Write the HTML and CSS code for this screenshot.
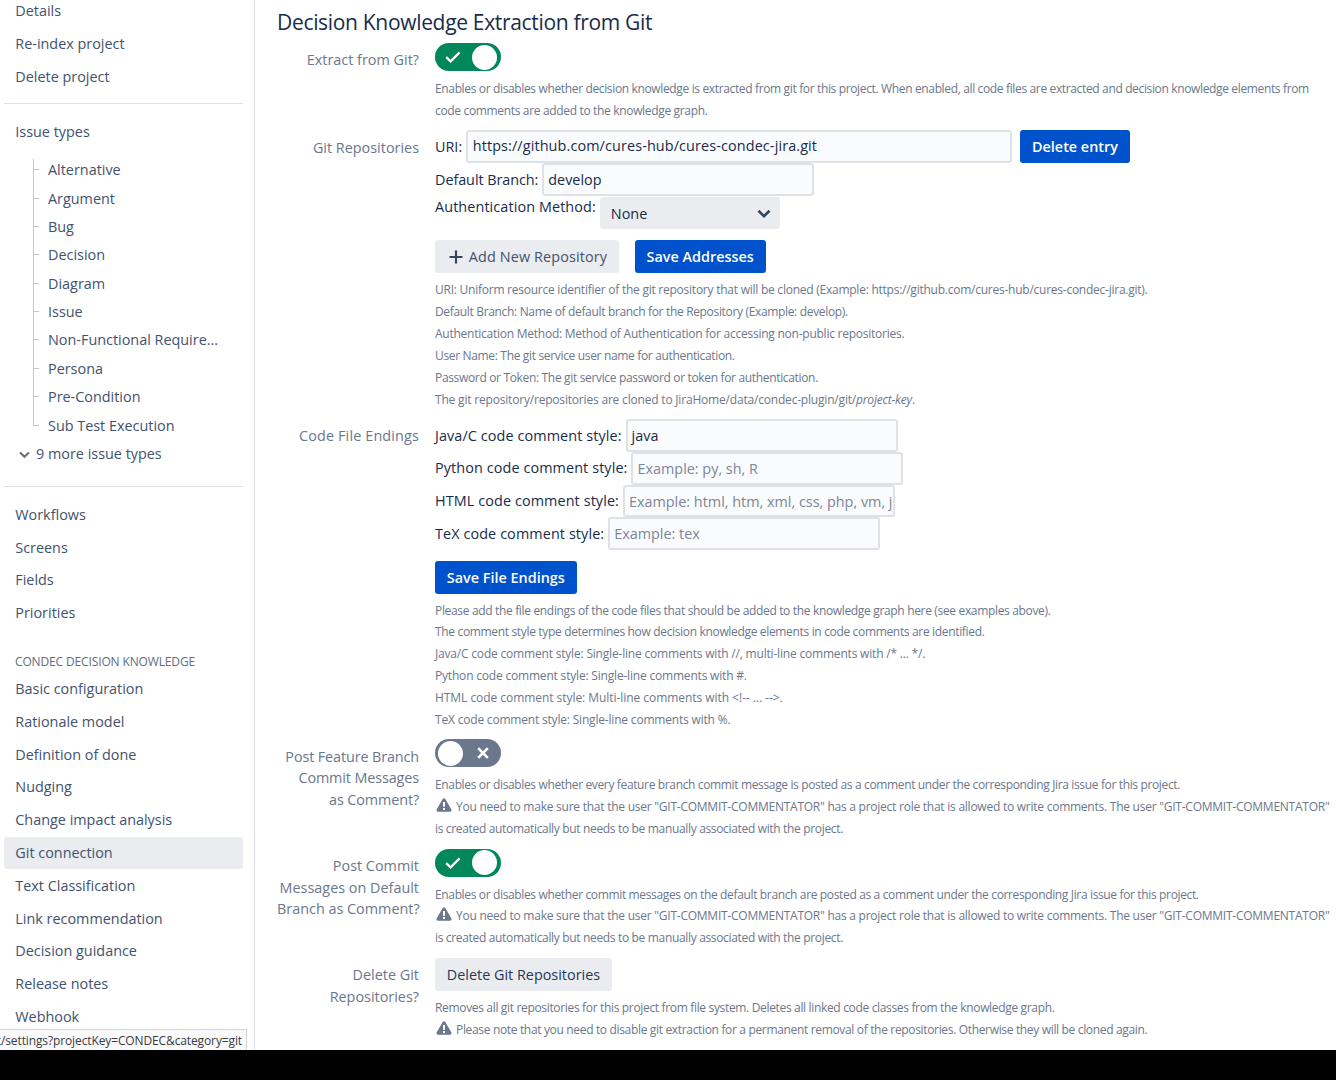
FILE: index.html
```html
<!DOCTYPE html>
<html lang="en">
<head>
<meta charset="utf-8">
<title>Git connection - Project settings</title>
<link rel="stylesheet" href="styles.css">
</head>
<body>
<svg class="sprite" aria-hidden="true">
  <symbol id="check" viewBox="0 0 16 12"><path d="M1.2 6.2 5.6 10.4 14.6 1.4" fill="none" stroke="#fff" stroke-width="2.3"/></symbol>
  <symbol id="cross" viewBox="0 0 12 12"><path d="M1.2 1.2 10.8 10.8M10.8 1.2 1.2 10.8" fill="none" stroke="#fff" stroke-width="2.6"/></symbol>
  <symbol id="warn" viewBox="0 0 16 14"><path fill-rule="evenodd" d="M6.7 1.1Q8-.8 9.3 1.1L15.4 11.5Q16 13.6 14 13.7H2Q0 13.6.6 11.5ZM7 4V8.8H9V4ZM7 10V12H9V10Z" fill="#6b778c"/></symbol>
</svg>
<div class="page">
  <nav class="sidebar">
    <ul class="menu menu-top">
      <li>Details</li><li>Re-index project</li><li>Delete project</li>
    </ul>
    <hr>
    <ul class="menu menu-types"><li>Issue types</li></ul>
    <ul class="tree">
      <li>Alternative</li><li>Argument</li><li>Bug</li><li>Decision</li><li>Diagram</li><li>Issue</li><li>Non-Functional Require...</li><li>Persona</li><li>Pre-Condition</li><li>Sub Test Execution</li>
    </ul>
    <div class="more"><svg width="11" height="8" viewBox="0 0 11 8"><path d="M1 1.5 5.5 5.8 10 1.5" fill="none" stroke="#707070" stroke-width="2.2"/></svg><span>9 more issue types</span></div>
    <hr class="hr-low">
    <ul class="menu menu-types">
      <li>Workflows</li><li>Screens</li><li>Fields</li><li>Priorities</li>
    </ul>
    <h3 class="nav-heading"><span>CONDEC DECISION KNOWLEDGE</span></h3>
    <ul class="menu">
      <li>Basic configuration</li><li>Rationale model</li><li>Definition of done</li><li>Nudging</li><li>Change impact analysis</li><li class="active">Git connection</li><li>Text Classification</li><li>Link recommendation</li><li>Decision guidance</li><li>Release notes</li><li>Webhook</li>
    </ul>
    <div class="status"><span>t/settings?projectKey=CONDEC&amp;category=git</span></div>
  </nav>
  <main class="content">
    <h2><span>Decision Knowledge Extraction from Git</span></h2>

    <section class="field">
      <div class="label">Extract from Git?</div>
      <div class="control">
        <div class="toggle on"><svg width="16" height="12"><use href="#check"/></svg><i></i></div>
        <div class="help"><p class="tight">Enables or disables whether decision knowledge is extracted from git for this project. When enabled, all code files are extracted and decision knowledge elements from</p><p>code comments are added to the knowledge graph.</p></div>
      </div>
    </section>

    <section class="field">
      <div class="label">Git Repositories</div>
      <div class="control">
        <div class="row"><label class="plain">URI:</label><div class="input wide">https://github.com/cures-hub/cures-condec-jira.git</div><button class="btn primary delete-entry">Delete entry</button></div>
        <div class="row"><label class="narrow">Default Branch:</label><div class="input">develop</div></div>
        <div class="row auth"><label>Authentication Method:</label><div class="select"><span>None</span><svg width="14" height="10" viewBox="0 0 14 10"><path d="M1.5 1.8 7 7.2 12.5 1.8" fill="none" stroke="#344563" stroke-width="2.6"/></svg></div></div>
        <div class="actions"><button class="btn add"><svg width="14" height="14" viewBox="0 0 14 14"><path d="M7 .5V13.5M.5 7H13.5" stroke="#344563" stroke-width="2.2"/></svg>Add New Repository</button><button class="btn primary">Save Addresses</button></div>
        <div class="help"><p class="loose">URI: Uniform resource identifier of the git repository that will be cloned (Example: https://github.com/cures-hub/cures-condec-jira.git).</p><p>Default Branch: Name of default branch for the Repository (Example: develop).</p><p class="loose">Authentication Method: Method of Authentication for accessing non-public repositories.</p><p>User Name: The git service user name for authentication.</p><p>Password or Token: The git service password or token for authentication.</p><p class="looser">The git repository/repositories are cloned to JiraHome/data/condec-plugin/git/<em>project-key</em>.</p></div>
      </div>
    </section>

    <section class="field">
      <div class="label spaced">Code File Endings</div>
      <div class="control">
        <div class="row"><label>Java/C code comment style:</label><div class="input">java</div></div>
        <div class="row"><label>Python code comment style:</label><div class="input hint">Example: py, sh, R</div></div>
        <div class="row"><label>HTML code comment style:</label><div class="input hint">Example: html, htm, xml, css, php, vm, j</div></div>
        <div class="row"><label>TeX code comment style:</label><div class="input hint">Example: tex</div></div>
        <div class="actions"><button class="btn primary">Save File Endings</button></div>
        <div class="help"><p>Please add the file endings of the code files that should be added to the knowledge graph here (see examples above).</p><p>The comment style type determines how decision knowledge elements in code comments are identified.</p><p class="looser">Java/C code comment style: Single-line comments with //, multi-line comments with /* ... */.</p><p class="looser">Python code comment style: Single-line comments with #.</p><p class="loosest">HTML code comment style: Multi-line comments with &lt;!-- ... --&gt;.</p><p class="looser">TeX code comment style: Single-line comments with %.</p></div>
      </div>
    </section>

    <section class="field">
      <div class="label snug">Post Feature Branch<br>Commit Messages<br>as Comment?</div>
      <div class="control">
        <div class="toggle off"><i></i><svg width="12" height="12"><use href="#cross"/></svg></div>
        <div class="help"><p class="tight">Enables or disables whether every feature branch commit message is posted as a comment under the corresponding Jira issue for this project.</p><p class="loose"><svg class="warn" width="16" height="14"><use href="#warn"/></svg>You need to make sure that the user "GIT-COMMIT-COMMENTATOR" has a project role that is allowed to write comments. The user "GIT-COMMIT-COMMENTATOR"</p><p>is created automatically but needs to be manually associated with the project.</p></div>
      </div>
    </section>

    <section class="field">
      <div class="label">Post Commit<br>Messages on Default<br>Branch as Comment?</div>
      <div class="control">
        <div class="toggle on"><svg width="16" height="12"><use href="#check"/></svg><i></i></div>
        <div class="help"><p class="tight">Enables or disables whether commit messages on the default branch are posted as a comment under the corresponding Jira issue for this project.</p><p class="loose"><svg class="warn" width="16" height="14"><use href="#warn"/></svg>You need to make sure that the user "GIT-COMMIT-COMMENTATOR" has a project role that is allowed to write comments. The user "GIT-COMMIT-COMMENTATOR"</p><p>is created automatically but needs to be manually associated with the project.</p></div>
      </div>
    </section>

    <section class="field">
      <div class="label">Delete Git<br>Repositories?</div>
      <div class="control">
        <button class="btn dark">Delete Git Repositories</button>
        <div class="help"><p>Removes all git repositories for this project from file system. Deletes all linked code classes from the knowledge graph.</p><p><svg class="warn" width="16" height="14"><use href="#warn"/></svg>Please note that you need to disable git extraction for a permanent removal of the repositories. Otherwise they will be cloned again.</p></div>
      </div>
    </section>
  </main>
</div>
</body>
</html>
```
FILE: styles.css
```css
* { box-sizing: border-box; }
body { margin: 0; height: 1080px; background: #000; overflow: hidden; font: 14.4px/21.84px "Open Sans", "Noto Sans", sans-serif; color: #172b4d; }
ul, h2, h3, p { margin: 0; padding: 0; list-style: none; font-weight: 400; }
.sprite { display: none; }
.page { display: flex; height: 1050px; background: #fff; overflow: hidden; }

.sidebar { position: relative; flex: none; width: 255px; padding: 0 11px 0 4px; border-right: 1px solid #dfe1e6; color: #42526e; white-space: nowrap; }
.menu li { height: 32.77px; padding-left: 11.3px; line-height: 32px; border-radius: 3px; }
.menu-top { margin-top: -5px; }
.menu .active { height: 32px; margin-bottom: .77px; background: #ebecf0; }
.sidebar hr { height: 1px; margin: 9.7px 0 11.6px; border: 0; background: #dfe1e6; }
.sidebar .hr-low { margin: 17.6px 0 11.8px; }
.tree { margin: 7.8px 0 0 29px; }
.tree li { position: relative; height: 28.4px; padding-left: 15px; line-height: 28px; }
.tree li::before { content: ""; position: absolute; left: 0; top: 0; width: 1px; height: 100%; background: #c1c7d0; }
.tree li:first-child::before { top: 3px; height: 26px; }
.tree li:last-child::before { height: 14px; }
.tree li::after { content: ""; position: absolute; left: 0; top: 13px; width: 6px; height: 1px; background: #c1c7d0; }
.more { display: flex; align-items: center; height: 28.4px; padding-left: 15px; gap: 6px; }
.more svg { margin-top: 2px; }
.nav-heading { height: 20px; margin: 21.8px 0 1.5px; padding-left: 11px; font-size: 12px; line-height: 20px; letter-spacing: -.14px; color: #5e6c84; }
.status { position: absolute; left: 0; bottom: 0; display: flex; justify-content: flex-end; width: 247px; height: 21px; padding-right: 4px; overflow: hidden; border: solid #d5d5d5; border-width: 1px 1px 0 0; background: #f9f9fa; color: #3b3b3f; font-size: 12px; line-height: 22px; letter-spacing: -.12px; }

.content { flex: 1; min-width: 0; padding-left: 22px; white-space: nowrap; }
h2 { height: 43px; font-size: 21px; line-height: 44px; letter-spacing: -.32px; }
.field { display: grid; grid-template-columns: 142px 1fr; column-gap: 16px; margin-bottom: 8.7px; }
.label { padding-top: 6.2px; text-align: right; color: #6b778c; }
.spaced { letter-spacing: .14px; }
.snug { letter-spacing: -.12px; }
.control { min-width: 0; }
.toggle { display: flex; align-items: center; justify-content: space-between; width: 66px; height: 28px; border-radius: 14px; }
.toggle i { width: 25px; height: 25px; border-radius: 50%; background: #fff; }
.on { padding: 0 4px 0 10px; background: #00875a; }
.off { padding: 0 12px 0 2.5px; background: #6b778c; }
.help { padding-top: 7px; font-size: 12px; letter-spacing: -.335px; color: #6b778c; }
.help .tight { letter-spacing: -.355px; }
.help .loose { letter-spacing: -.245px; }
.help .looser { letter-spacing: -.19px; }
.help .loosest { letter-spacing: -.05px; }
.actions + .help, .btn + .help { padding-top: 6px; }
.row { display: flex; align-items: center; height: 32.75px; gap: 4px; }
.row label { flex: none; letter-spacing: .1px; }
.row .plain { letter-spacing: 0; }
.row .narrow { letter-spacing: -.06px; }
.input { width: 272px; height: 32.75px; padding: 0 4px; border: 2px solid #dfe1e6; border-radius: 3px; background: #fafbfc; line-height: 29px; overflow: hidden; }
.wide { width: 546px; padding-left: 4.5px; letter-spacing: .12px; line-height: 28.6px; }
.hint { color: #7a869a; }
.delete-entry { margin-left: 4px; }
.auth { height: 34px; align-items: flex-start; }
.select { display: flex; align-items: center; justify-content: space-between; width: 180px; height: 32px; margin-top: 1.2px; padding: 1px 9px 0 11px; border-radius: 3px; background: #ebecf0; }
.actions { display: flex; gap: 16px; margin-top: 10.5px; }
.btn { display: inline-flex; align-items: center; height: 33px; padding: 1px 11.8px 0; border: 0; border-radius: 3px; background: #ebecf0; color: #42526e; font: inherit; white-space: nowrap; }
.btn svg { margin: -1px 6px 0 2px; }
.add { letter-spacing: .12px; }
.primary { background: #0052cc; color: #fff; font-weight: 600; }
.dark { color: #253858; }
.btn.dark { display: flex; }
.warn { margin: 0 4px 0 1px; vertical-align: -1px; }
```
